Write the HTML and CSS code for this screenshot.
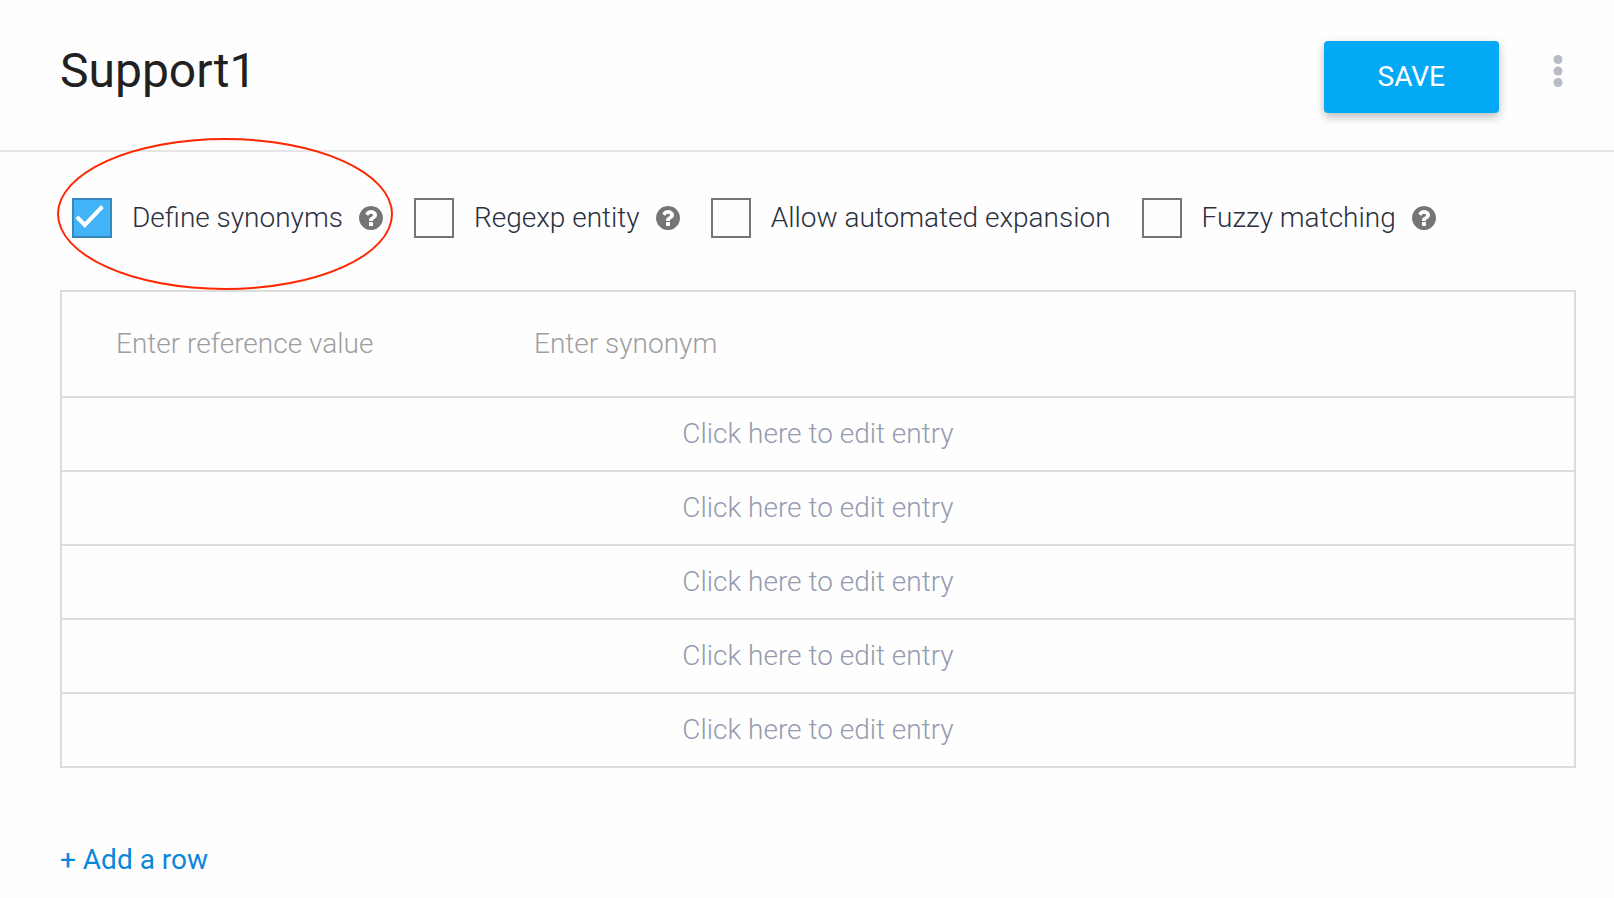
FILE: index.html
```html
<!DOCTYPE html>
<html lang="en">
<head>
<meta charset="utf-8">
<meta name="viewport" content="width=device-width, initial-scale=1">
<title>Support1</title>
<link rel="stylesheet" href="styles.css">
</head>
<body>
<svg class="symbols" aria-hidden="true">
  <symbol id="help" viewBox="0 0 1536 1536">
    <path d="M896 1248v-192q0-14-9-23t-23-9h-192q-14 0-23 9t-9 23v192q0 14 9 23t23 9h192q14 0 23-9t9-23zm256-672q0-88-55.500-163t-138.500-116-170.500-41q-243 0-371 213-15 24 8 42l132 100q7 6 19 6 16 0 25-12 53-68 86-92 34-24 86-24 48 0 85.500 26t37.500 59q0 38-20 61t-68 45q-63 28-115.500 86.500t-52.500 125.500v36q0 14 9 23t23 9h192q14 0 23-9t9-23q0-19 21.500-49.500t54.500-49.500q32-18 49-28.500t46-35 44.500-48 28-60.500 12.500-81zm384 192q0 209-103 385.500t-279.500 279.500-385.500 103-385.500-103-279.500-279.500-103-385.500 103-385.500 279.500-279.500 385.500-103 385.500 103 279.500 279.500 103 385.500z"/>
  </symbol>
</svg>

<header class="header">
  <h1 class="title">Support1</h1>
  <button class="save" type="button">SAVE</button>
  <button class="more" type="button" aria-label="More options">
    <svg class="more-icon" viewBox="0 0 10 32" aria-hidden="true">
      <circle cx="5" cy="4.500" r="4.500"/>
      <circle cx="5" cy="16" r="4.500"/>
      <circle cx="5" cy="27.500" r="4.500"/>
    </svg>
  </button>
</header>

<main class="content">
  <div class="options">
    <div class="option option-marked">
      <label class="choice"><input class="check" type="checkbox" checked>Define synonyms</label>
      <button class="help" type="button" aria-label="About synonyms"><svg class="help-icon"><use href="#help"/></svg></button>
      <span class="marker"></span>
    </div>
    <div class="option">
      <label class="choice"><input class="check" type="checkbox">Regexp entity</label>
      <button class="help" type="button" aria-label="About regexp entities"><svg class="help-icon"><use href="#help"/></svg></button>
    </div>
    <div class="option">
      <label class="choice"><input class="check" type="checkbox">Allow automated expansion</label>
    </div>
    <div class="option">
      <label class="choice"><input class="check" type="checkbox">Fuzzy matching</label>
      <button class="help" type="button" aria-label="About fuzzy matching"><svg class="help-icon"><use href="#help"/></svg></button>
    </div>
  </div>

  <table class="entries">
    <tbody>
      <tr>
        <td class="cell-value"><input class="field" type="text" placeholder="Enter reference value" aria-label="Reference value"></td>
        <td class="cell-synonym"><input class="field" type="text" placeholder="Enter synonym" aria-label="Synonym"></td>
      </tr>
      <tr><td class="cell-empty" colspan="2"><button class="edit" type="button">Click here to edit entry</button></td></tr>
      <tr><td class="cell-empty" colspan="2"><button class="edit" type="button">Click here to edit entry</button></td></tr>
      <tr><td class="cell-empty" colspan="2"><button class="edit" type="button">Click here to edit entry</button></td></tr>
      <tr><td class="cell-empty" colspan="2"><button class="edit" type="button">Click here to edit entry</button></td></tr>
      <tr><td class="cell-empty" colspan="2"><button class="edit" type="button">Click here to edit entry</button></td></tr>
    </tbody>
  </table>

  <a class="add" href="#">+ Add a row</a>
</main>
</body>
</html>
```
FILE: styles.css
```css
* {
  box-sizing: border-box;
}

body {
  margin: 0;
  background: #fefefe;
  color: #2b303f;
  font: 300 28px/32px Roboto, "Liberation Sans", sans-serif;
}

button,
input {
  margin: 0;
  padding: 0;
  border: 0;
  background: none;
  font: inherit;
}

button {
  cursor: pointer;
}

.symbols {
  display: none;
}

.header {
  display: flex;
  align-items: flex-start;
  padding: 41px 46px 37px 60px;
  border-bottom: 2px solid #e5e5e5;
}

.title {
  flex: 1;
  margin: 0;
  color: #212121;
  font-size: 48px;
  font-weight: 400;
  line-height: 60px;
}

.save {
  padding: 20px 54px;
  border-radius: 4px;
  background: #03a9f4;
  box-shadow: 0 4px 10px rgba(0, 0, 0, 0.26);
  color: #fff;
  font-weight: 400;
}

.more {
  display: flex;
  align-items: center;
  height: 60px;
  padding: 0 5px;
  margin-left: 49px;
}

.more-icon {
  width: 10px;
  height: 32px;
  fill: #b7bbc6;
}

.content {
  padding: 46px 38px 23px 60px;
}

.options {
  display: flex;
  flex-wrap: wrap;
  gap: 31px;
  padding: 0 12px;
}

.option {
  display: flex;
  align-items: center;
  gap: 16px;
}

.option-marked {
  position: relative;
}

.choice {
  display: flex;
  align-items: center;
  gap: 20px;
  line-height: 34px;
}

.check {
  width: 40px;
  height: 40px;
  border: 2px solid #757575;
  appearance: none;
}

.check:checked {
  border-color: #3388bd;
  background: #42b3f6;
}

.check:checked::before {
  content: "";
  display: block;
  height: 36px;
  background: #fff;
  clip-path: polygon(4% 51%, 12% 43%, 30% 61%, 75% 14%, 83% 22%, 30% 78%);
}

.help {
  display: flex;
}

.help-icon {
  width: 24px;
  height: 24px;
  fill: #757575;
}

.marker {
  position: absolute;
  inset: -60px -10px -52px -15px;
  border: 2px solid #ff2600;
  border-radius: 50%;
  pointer-events: none;
}

.entries {
  width: 100%;
  margin-top: 52px;
  border: 2px solid #dcdcdc;
  border-spacing: 0;
  table-layout: fixed;
}

.cell-value,
.cell-synonym {
  padding: 36px 0 36px 54px;
}

.cell-value {
  width: 418px;
}

.field {
  display: block;
  width: 100%;
  height: 32px;
  outline: 0;
}

.field::placeholder {
  color: #9e9e9e;
  opacity: 1;
}

.cell-empty {
  padding: 0;
  border-top: 2px solid #dcdcdc;
}

.edit {
  display: block;
  width: 100%;
  padding: 20px 0;
  color: #959bb0;
}

.add {
  display: inline-block;
  margin-top: 76px;
  color: #0b87da;
  font-weight: 400;
  text-decoration: none;
}
```
